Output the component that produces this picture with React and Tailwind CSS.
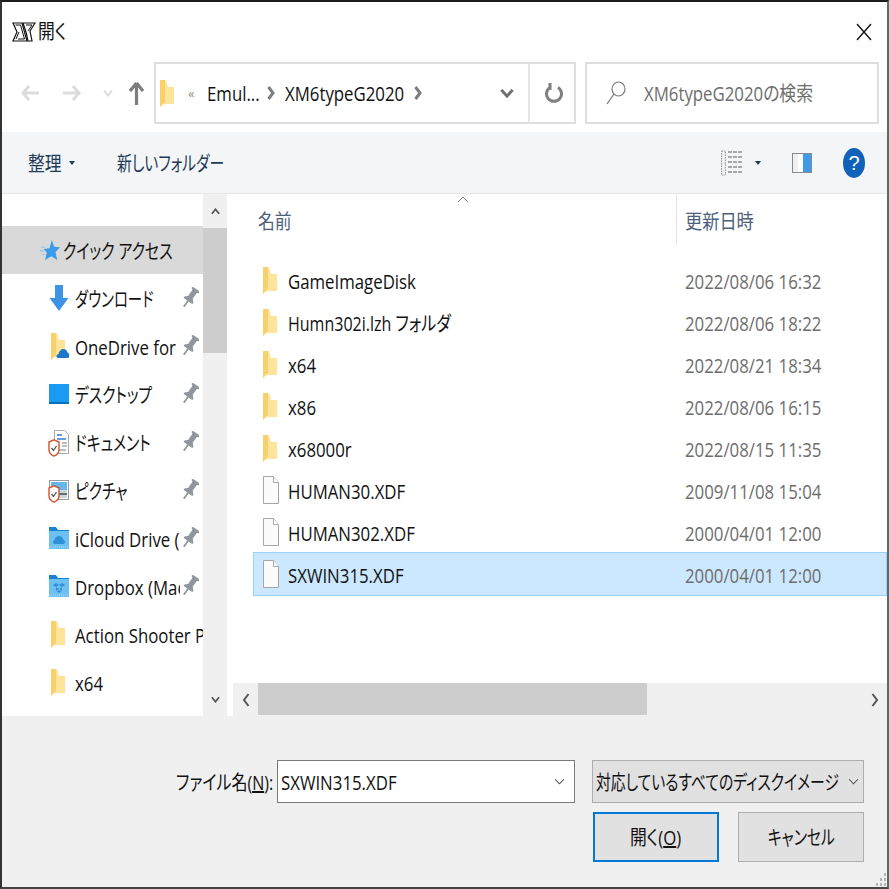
const font = "[font-family:'Open_Sans','Noto_Sans_CJK_JP',sans-serif]";

// squeezed text, the screenshot is horizontally compressed
function T({ children, className = "", s = "scale-x-[.84]", o = "origin-left", y = "translate-y-[2px]" }) {
  return (
    <span className={`inline-block whitespace-nowrap [font-feature-settings:'palt'] text-[20px] leading-[28px] ${s} ${o} ${y} ${className}`}>
      {children}
    </span>
  );
}

function Folder({ className = "" }) {
  return (
    <svg width="14" height="28" viewBox="0 0 14 28" className={`shrink-0 ${className}`}>
      <path d="M0 1h6l2 7h6v17H4l-4 3z" fill="#fde49b" />
      <path d="M0 1h5v22l-3 2-2 3z" fill="#f8d06c" />
    </svg>
  );
}

function FileIcon() {
  return (
    <svg width="16" height="28" viewBox="0 0 16 28" className="shrink-0">
      <path d="M.5.5h10l5 6v21H.5z" fill="#fbfbfb" stroke="#a6a6a6" />
      <path d="M10.5.5v6h5" fill="#fff" stroke="#a6a6a6" />
    </svg>
  );
}

function Pin() {
  return (
    <svg width="18" height="22" viewBox="0 0 20 24" className="shrink-0">
      <path transform="rotate(35 10 12)" d="M5 0h10v2l-2 1v8l3 3v2h-5v8H9v-8H4v-2l3-3V3L5 2z" fill="#8e979f" />
    </svg>
  );
}

function Shield() {
  return (
    <svg width="12" height="18" viewBox="0 0 12 18" className="absolute left-[-1px] bottom-[-3px]">
      <path d="M6 .8L11 3v8c0 3-2.500 5-5 6.200C3.500 16 1 14 1 11V3z" fill="#fff" stroke="#d4532b" strokeWidth="1.400" />
      <path d="M3.500 9l2 2.500L8.500 7" fill="none" stroke="#555" strokeWidth="1.300" />
    </svg>
  );
}

function SideIcon({ kind }) {
  if (kind === "star") {
    return (
      <svg width="20" height="24" viewBox="0 0 22 24" className="shrink-0">
        <path d="M13 1l2.600 7.500L22 9l-5 5.500 2 8.500-6.500-4-7 4 2-8-3.500-4 6.500-1z" fill="#3a9bea" />
        <path d="M1 9h5M0 13h4M2 17h3" stroke="#8cc6f3" strokeWidth="1.200" />
      </svg>
    );
  }
  if (kind === "down") {
    return (
      <svg width="20" height="28" viewBox="0 0 20 28" className="shrink-0">
        <path d="M6 1h8v13h5.500L10 27 .5 14H6z" fill="#3d94e6" />
      </svg>
    );
  }
  if (kind === "onedrive") {
    return (
      <span className="relative flex w-5 h-7 shrink-0">
        <Folder className="ml-[2px]" />
        <svg width="14" height="10" viewBox="0 0 14 10" className="absolute left-[7px] bottom-[2px]">
          <path d="M2 10C0 10 0 6 2.500 6 3 3 5 1 7.500 1c2 0 3.500 1.500 4 3.500 2 0 2.500 5.500.5 5.500z" fill="#1d77c9" />
        </svg>
      </span>
    );
  }
  if (kind === "desktop") {
    return <span className="w-5 h-5 shrink-0 bg-[#1a9af0] border-b-2 border-b-[#0a6fb8]"></span>;
  }
  if (kind === "doc") {
    return (
      <span className="relative flex justify-end w-5 h-6 shrink-0">
        <svg width="15" height="24" viewBox="0 0 15 24">
          <path d="M.5.500h10l4 4v19H.5z" fill="#fff" stroke="#a9a9a9" />
          <path d="M3 5h5M3 9h9" stroke="#2e7fd4" strokeWidth="1.500" />
          <path d="M8 13h5M8 16h5M3 20h9" stroke="#6f7c86" strokeWidth="1.200" />
        </svg>
        <Shield />
      </span>
    );
  }
  if (kind === "pic") {
    return (
      <span className="relative flex w-5 h-5 shrink-0">
        <svg width="20" height="20" viewBox="0 0 20 20">
          <rect x=".5" y=".5" width="19" height="19" fill="#fff" stroke="#9a9a9a" />
          <rect x="2" y="2" width="16" height="8" fill="#67b6ea" />
          <rect x="2" y="10" width="16" height="8" fill="#c9d7dc" />
          <path d="M7 13h11v2H7z" fill="#5f6f78" />
        </svg>
        <Shield />
      </span>
    );
  }
  if (kind === "icloud" || kind === "dropbox") {
    return (
      <svg width="20" height="24" viewBox="0 0 20 24" className="shrink-0">
        <path d="M0 1h7l2 3h11v5H0z" fill="#1a83d0" />
        <rect y="5" width="20" height="18" fill="#6cc1f2" />
        <path d="M0 21h20" stroke="#a9dcf8" strokeDasharray="1 1" />
        {kind === "icloud" ? (
          <path d="M6 18c-2.500 0-2.500-4-.5-4 .5-2.500 2.500-4 4.500-4s4 1.500 4.500 4c2 0 2 4-.5 4z" fill="#2f8fd8" />
        ) : (
          <path d="M7 9l3 2-3 2-3-2zM13 9l3 2-3 2-3-2zM7 13l3 2-3 2zM13 13l-3 2 3 2zM10 16l2 1.500-2 1.500-2-1.500z" fill="#2f8fd8" />
        )}
      </svg>
    );
  }
  return <Folder className="ml-[2px]" />;
}

const sideItems = [
  { icon: "down", label: "ダウンロード", pin: true, s: "scale-x-[.72]" },
  { icon: "onedrive", label: "OneDrive for", pin: true },
  { icon: "desktop", label: "デスクトップ", pin: true, s: "scale-x-[.74]" },
  { icon: "doc", label: "ドキュメント", pin: true, s: "scale-x-[.74]" },
  { icon: "pic", label: "ピクチャ", pin: true, s: "scale-x-[.74]" },
  { icon: "icloud", label: "iCloud Drive (", pin: true },
  { icon: "dropbox", label: "Dropbox (Mac", pin: true },
  { icon: "folder", label: "Action Shooter P" },
  { icon: "folder", label: "x64" },
];

const files = [
  { name: "GameImageDisk", date: "2022/08/06 16:32", folder: true },
  { name: "Humn302i.lzh フォルダ", date: "2022/08/06 18:22", folder: true, s: "scale-x-[.80]" },
  { name: "x64", date: "2022/08/21 18:34", folder: true },
  { name: "x86", date: "2022/08/06 16:15", folder: true },
  { name: "x68000r", date: "2022/08/15 11:35", folder: true },
  { name: "HUMAN30.XDF", date: "2009/11/08 15:04" },
  { name: "HUMAN302.XDF", date: "2000/04/01 12:00" },
  { name: "SXWIN315.XDF", date: "2000/04/01 12:00", selected: true },
];

function Chevron({ dir = "down", color = "#606060", w = 10, h = 8, sw = 2 }) {
  const paths = {
    down: "M1 1.500l4 5 4-5",
    up: "M1 6.500l4-5 4 5",
  };
  return (
    <svg width={w} height={h} viewBox="0 0 10 8" preserveAspectRatio="none" className="shrink-0">
      <path d={paths[dir]} fill="none" stroke={color} strokeWidth={sw} />
    </svg>
  );
}

function Side({ dir, color = "#606060", sw = 2 }) {
  return (
    <svg width="8" height="14" viewBox="0 0 8 14" className="shrink-0">
      <path d={dir === "left" ? "M6.500 1L2 7l4.500 6" : "M1.500 1L6 7l-4.500 6"} fill="none" stroke={color} strokeWidth={sw} />
    </svg>
  );
}

function Logo() {
  return (
    <svg width="24" height="20" viewBox="0 0 24 20" className="shrink-0">
      <path d="M1 1h9l5 18H1l4-9z" fill="none" stroke="#111" strokeWidth="1.200" />
      <path d="M3.500 3h5l4 14H6M4 17l3-7" fill="none" stroke="#111" />
      <path d="M11 1h12l-5 8 2 10h-4l-2-9z" fill="none" stroke="#111" strokeWidth="1.200" />
      <path d="M14 3h6l-4 6" fill="none" stroke="#111" />
    </svg>
  );
}

export default function App() {
  return (
    <div className={`w-[889px] h-[889px] flex flex-col overflow-hidden bg-white text-[#111] border-t-2 border-t-[#1c1c1c] border-l-2 border-l-[#333] border-r-2 border-r-[#666] border-b-2 border-b-[#444] ${font}`}>
      {/* title bar */}
      <div className="h-[60px] shrink-0 flex items-center pl-[10px] pr-[15px]">
        <Logo />
        <T className="ml-[2px]" y="translate-y-0">開く</T>
        <svg width="16" height="18" viewBox="0 0 16 18" className="ml-auto">
          <path d="M1 1l14 16M15 1L1 17" stroke="#111" strokeWidth="1.400" fill="none" />
        </svg>
      </div>

      {/* address row */}
      <div className="h-[70px] shrink-0 flex items-start">
        <div className="w-[152px] h-[62px] shrink-0 flex items-center pl-[19px]">
          <svg width="18" height="16" viewBox="0 0 18 16" className="shrink-0">
            <path d="M8 1L2 8l6 7M2 8h16" fill="none" stroke="#dcdcdc" strokeWidth="3" />
          </svg>
          <svg width="18" height="16" viewBox="0 0 18 16" className="shrink-0 ml-[24px]">
            <path d="M10 1l6 7-6 7M16 8H0" fill="none" stroke="#dcdcdc" strokeWidth="3" />
          </svg>
          <span className="ml-[22px]"><Chevron color="#dcdcdc" /></span>
          <svg width="15" height="23" viewBox="0 0 15 23" className="shrink-0 ml-[16px]">
            <path d="M7.500 1L1 9M7.500 1L14 9M7.500 2v21" fill="none" stroke="#7d7d7d" strokeWidth="3.200" />
          </svg>
        </div>
        <div className="w-[422px] h-[62px] shrink-0 flex items-center border-2 border-[#dedede] pl-[4px]">
          <Folder />
          <span className="ml-[14px] text-[13px] text-[#8a8a8a] leading-none">«</span>
          <T className="ml-[13px] w-[60px]" y="translate-y-[1px]">Emul...</T>
          <Side color="#7d7d7d" sw={3} />
          <T className="ml-[10px] w-[129px]" y="translate-y-[1px]">XM6typeG2020</T>
          <Side color="#7d7d7d" sw={3} />
          <span className="ml-[78px]"><Chevron color="#707070" w={14} h={10} sw={2.200} /></span>
          <div className="ml-[14px] h-full border-l-2 border-l-[#e6e6e6] flex items-center pl-[15px]">
            <svg width="18" height="22" viewBox="0 0 18 22">
              <path d="M5 4.500a7.500 7.500 0 1 0 8 0M5 0v7" fill="none" stroke="#808080" strokeWidth="3" transform="translate(0 1)" />
            </svg>
          </div>
        </div>
        <div className="ml-[9px] w-[294px] h-[62px] shrink-0 flex items-center border-2 border-[#dedede] pl-[19px]">
          <svg width="20" height="24" viewBox="0 0 20 24">
            <ellipse cx="12.500" cy="8" rx="6.500" ry="7" fill="none" stroke="#7a7a7a" strokeWidth="1.200" />
            <path d="M8 13L1 23" stroke="#7a7a7a" strokeWidth="1.300" />
          </svg>
          <T className="ml-[18px] text-[#6d6d6d]" y="translate-y-[1px]">XM6typeG2020の検索</T>
        </div>
      </div>

      {/* toolbar */}
      <div className="h-[62px] shrink-0 flex items-center bg-[#f3f5f6] text-[#1e3a57] border-b border-b-[#e5e5e5] pl-[26px] pr-[22px]">
        <T className="w-[41px]" y="translate-y-[1px]">整理</T>
        <span className="w-0 h-0 border-x-[3px] border-x-transparent border-t-[4px] border-t-[#1e3a57]"></span>
        <T className="ml-[42px]" s="scale-x-[.74]" y="translate-y-[1px]">新しいフォルダー</T>
        <svg width="21" height="26" viewBox="0 0 21 26" className="ml-auto">
          <path d="M.5 1h4v24h-4z" fill="#eee" stroke="#999" strokeDasharray="1.500 1" />
          <path d="M7 2h14M7 7h14M7 12h14M7 17h14M7 22h14" stroke="#5a5a5a" strokeDasharray="4 1" />
        </svg>
        <span className="ml-[13px] w-0 h-0 border-x-[3px] border-x-transparent border-t-[4px] border-t-[#1e3a57]"></span>
        <span className="ml-[31px] w-[20px] h-[20px] flex border border-[#8a8a8a] bg-white">
          <span className="w-[5px] bg-[#f0f0f0]"></span>
          <span className="ml-auto w-[8px] bg-[#3f9bea]"></span>
        </span>
        <span className="ml-[31px] w-[22px] h-[30px] rounded-[50%] bg-[#0f62b8] text-white text-[20px] leading-[30px] text-center [font-family:'Liberation_Sans',sans-serif]">?</span>
      </div>

      {/* main panes */}
      <div className="h-[522px] shrink-0 flex">
        <div className="w-[201px] shrink-0 overflow-hidden pt-[32px]">
          <div className="h-[48px] flex items-center bg-[#d9d9d9] pl-[38px]">
            <SideIcon kind="star" />
            <T className="ml-[3px]" s="scale-x-[.745]">クイック アクセス</T>
          </div>
          {sideItems.map((item) => (
            <div key={item.label} className="h-[48px] flex items-center pl-[47px]">
              <span className="w-[26px] shrink-0 flex"><SideIcon kind={item.icon} /></span>
              <div className={`relative h-full flex items-center overflow-hidden ${item.pin ? "w-[105px]" : "w-[128px]"}`}>
                <T s={item.s}>{item.label}</T>
              </div>
              {item.pin && <span className="ml-[1px]"><Pin /></span>}
            </div>
          ))}
        </div>
        <div className="w-[24px] shrink-0 flex flex-col items-center bg-[#f0f0f0]">
          <div className="h-[34px] flex items-center"><Chevron dir="up" color="#555" w={9} h={7} /></div>
          <div className="w-full h-[125px] bg-[#cdcdcd]"></div>
          <div className="mt-auto h-[34px] flex items-center"><Chevron color="#555" w={9} h={7} /></div>
        </div>
        <div className="relative flex-1 flex flex-col min-w-0 ml-[6px]">
          <svg width="12" height="7" viewBox="0 0 12 7" className="absolute left-[224px] top-[2px]">
            <path d="M1 6l5-5 5 5" fill="none" stroke="#8a8a8a" />
          </svg>
          <div className="h-[51px] shrink-0 flex text-[#4c607a]">
            <div className="w-[443px] pl-[25px] pt-[12px]"><T>名前</T></div>
            <div className="border-l border-l-[#e5e5e5] pl-[8px] pt-[12px]"><T s="scale-x-[.86]">更新日時</T></div>
          </div>
          <div className="pt-[14px]">
            {files.map((f) => (
              <div key={f.name} className={`flex items-center pl-[9px] ml-[20px] border ${f.selected ? "h-[44px] -mt-[1px] bg-[#cce8ff] border-[#99d1ff]" : "h-[42px] border-transparent"}`}>
                <span className="w-[25px] shrink-0 flex">
                  {f.folder ? <Folder /> : <FileIcon />}
                </span>
                <T className="w-[397px]" s={f.s}>{f.name}</T>
                <T className="text-[#6d6d6d]">{f.date}</T>
              </div>
            ))}
          </div>
          <div className="mt-auto h-[33px] shrink-0 flex items-center bg-[#f0f0f0]">
            <span className="ml-[9px]"><Side dir="left" color="#555" /></span>
            <div className="ml-[8px] w-[389px] h-[32px] self-start bg-[#cdcdcd]"></div>
            <span className="ml-auto mr-[8px]"><Side color="#555" /></span>
          </div>
        </div>
      </div>

      {/* bottom form */}
      <div className="relative flex-1 bg-[#f0f0f0] pt-[44px] flex flex-col">
        <div className="flex items-center h-[43px]">
          <div className="w-[275px] pl-[174px] shrink-0"><T s="scale-x-[.80]" y="translate-y-[1px]">ファイル名(<u>N</u>):</T></div>
          <div className="w-[298px] h-[43px] shrink-0 flex items-center bg-white border border-[#7a7a7a] pl-[3px] pr-[9px]">
            <T y="translate-y-[1px]">SXWIN315.XDF</T>
            <span className="ml-auto"><Chevron color="#555" w={11} h={7} sw={1} /></span>
          </div>
          <div className="ml-[17px] w-[272px] h-[43px] shrink-0 flex items-center bg-[#e1e1e1] border border-[#adadad] pl-[3px] pr-[5px] overflow-hidden">
            <T className="w-[252px]" s="scale-x-[.74]" y="translate-y-[1px]">対応しているすべてのディスクイメージ</T>
            <Chevron color="#555" w={11} h={7} sw={1} />
          </div>
        </div>
        <div className="flex justify-end mt-[9px] pr-[23px] gap-[19px]">
          <button className="w-[126px] h-[50px] flex items-center justify-center bg-[#e1e1e1] border-2 border-[#0078d7]"><T o="origin-center" y="translate-y-[1px]">開く(<u>O</u>)</T></button>
          <button className="w-[126px] h-[50px] flex items-center justify-center bg-[#e1e1e1] border border-[#adadad]"><T o="origin-center" s="scale-x-[.74]" y="translate-y-[1px]">キャンセル</T></button>
        </div>
        <svg width="11" height="13" viewBox="0 0 11 13" className="absolute right-[1px] bottom-[1px]">
          <path d="M9 0h2v3H9zM5 5h2v3H5zM9 5h2v3H9zM1 10h2v3H1zM5 10h2v3H5zM9 10h2v3H9z" fill="#b5b5b5" />
        </svg>
      </div>
    </div>
  );
}
